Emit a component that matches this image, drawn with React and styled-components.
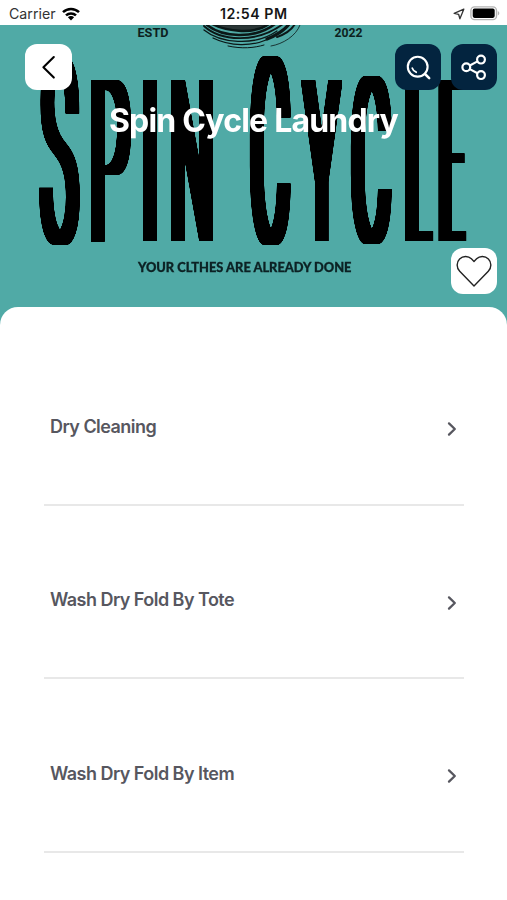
import React from "react"
import styled, { createGlobalStyle } from "styled-components"

const GlobalStyle = createGlobalStyle`
  :root {
    --white: #fff;
    --black: #000;
    --teal: #50aaa6;
    --navy: #03243f;
    --text: #57575f;
    --line: #e8e8e8;
  }
  * {
    box-sizing: border-box;
  }
  body {
    margin: 0;
    background: var(--white);
    font-family: Inter, "Liberation Sans", sans-serif;
  }
`
const Screen = styled.div`
  width: 507px;
  height: 900px;
  overflow: hidden;
  display: flex;
  flex-direction: column;
  background: var(--white);
`
const StatusBar = styled.header`
  height: 25px;
  flex-shrink: 0;
  padding: 2px 7px 0 9px;
  display: grid;
  grid-template-columns: 1fr auto 1fr;
  align-items: center;
  color: #161616;
`
const StatusGroup = styled.div`
  display: flex;
  align-items: center;
  justify-content: ${props => (props.$end ? "flex-end" : "flex-start")};
  gap: ${props => (props.$end ? "5px" : "6px")};
  svg {
    display: block;
  }
`
const Carrier = styled.span`
  font-size: 14.2px;
  line-height: 20px;
  color: #333;
`
const Clock = styled.time`
  margin-right: 1.5px;
  font-size: 14.2px;
  line-height: 20px;
  font-weight: 600;
  letter-spacing: 0.5px;
`
const Hero = styled.section`
  position: relative;
  height: 302px;
  flex-shrink: 0;
  padding: 18.5px 10px 0 25px;
  display: flex;
  flex-direction: column;
  background: var(--teal);
`
const Artwork = styled.svg`
  position: absolute;
  top: 0;
  left: 0;
`
const Toolbar = styled.div`
  position: relative;
  display: flex;
  gap: 9.5px;
`
const IconButton = styled.button`
  width: 46.5px;
  height: 46.5px;
  padding: 0;
  border: none;
  border-radius: 12px;
  display: flex;
  align-items: center;
  justify-content: center;
  flex-shrink: 0;
  color: ${props => (props.$dark ? "var(--white)" : "var(--black)")};
  background: ${props => (props.$dark ? "var(--navy)" : "var(--white)")};
  &:first-child {
    margin-right: auto;
  }
`
const Title = styled.h1`
  position: relative;
  margin: 10px 0 0;
  padding-right: 15px;
  font-size: 32px;
  line-height: 42px;
  font-weight: 700;
  letter-spacing: -0.8px;
  text-align: center;
  color: var(--white);
`
const Favorite = styled.div`
  position: relative;
  margin-top: 105.5px;
  align-self: flex-end;
`
const Sheet = styled.main`
  position: relative;
  flex: 1;
  margin-top: -20.5px;
  padding: 25.5px 43px 0 44px;
  border-radius: 18px 18px 0 0;
  background: var(--white);
`
const ServiceList = styled.ul`
  margin: 0;
  padding: 0;
  list-style: none;
`
const ServiceItem = styled.li`
  height: 173.5px;
  padding: 18px 6px 0;
  border-bottom: 2px solid var(--line);
  display: flex;
  align-items: center;
  justify-content: space-between;
`
const ServiceName = styled.span`
  font-size: 18px;
  font-weight: 600;
  line-height: 24px;
  letter-spacing: -0.54px;
  color: var(--text);
`
const Chevron = styled.svg`
  margin-top: 5px;
`

// x, baseline and scale of every letter of the hero wordmark
const letters = [
  { char: "S", x: 42.8, y: 240.5, sx: 0.56, sy: 2.53 },
  { char: "P", x: 91, y: 239, sx: 0.62, sy: 2.21 },
  { char: "I", x: 141.8, y: 239, sx: 0.62, sy: 2.21 },
  { char: "N", x: 171.8, y: 239, sx: 0.575, sy: 2.21 },
  { char: "C", x: 252, y: 240.5, sx: 0.56, sy: 2.53 },
  { char: "Y", x: 306.5, y: 239, sx: 0.51, sy: 2.21 },
  { char: "C", x: 353, y: 239.8, sx: 0.56, sy: 2.24 },
  { char: "L", x: 407.4, y: 239, sx: 0.4, sy: 2.21 },
  { char: "E", x: 441.3, y: 239, sx: 0.355, sy: 2.21 },
]

const services = ["Dry Cleaning", "Wash Dry Fold By Tote", "Wash Dry Fold By Item"]

const HeroArtwork = () => (
  <Artwork width="507" height="302" viewBox="0 25 507 302">
    <defs>
      {/* widens the stems and keeps their soft edges solid */}
      <filter id="heavy" filterUnits="userSpaceOnUse" x="20" y="40" width="470" height="220">
        <feMorphology operator="dilate" radius="6 2" />
        <feComponentTransfer>
          <feFuncA type="linear" slope="2.6" />
        </feComponentTransfer>
      </filter>
    </defs>
    <g fill="none" stroke="#0b1717" strokeLinecap="round">
      <path d="M212 24C224 30 252 36 269 24Z" fill="#2b3636" strokeWidth="2.4" />
      <path d="M207 25C222 37 254 40 275 24" strokeWidth="2.6" />
      <path d="M204 26C220 41 256 44 283 24" strokeWidth="1.9" />
      <path d="M204 30C220 43 254 47 277 31" strokeWidth="1.3" />
      <path d="M213 38C231 47 252 46 266 40" strokeWidth="1.2" />
      <path d="M228 46C242 49 254 48 264 45" strokeWidth="1" />
      <path d="M267 39C275 36 285 30 289 24" strokeWidth="3.2" />
      <path d="M277 37C286 34 292 29 295 24" strokeWidth="2" />
      <path d="M271 46C283 44 296 36 300 25" strokeWidth="0.8" />
    </g>
    <g fontFamily="Roboto, sans-serif" fontWeight="700" fontSize="13" fill="#0c1f20">
      <text x="137.5" y="36.7" textLength="31" lengthAdjust="spacingAndGlyphs">
        ESTD
      </text>
      <text x="334.5" y="36.7" textLength="28" lengthAdjust="spacingAndGlyphs">
        2022
      </text>
    </g>
    <g filter="url(#heavy)" fontFamily="Roboto, sans-serif" fontWeight="100" fontSize="100">
      {letters.map(({ char, x, y, sx, sy }) => (
        <text key={x} transform={`translate(${x} ${y}) scale(${sx} ${sy})`}>
          {char}
        </text>
      ))}
    </g>
    <text
      x="138"
      y="271.5"
      textLength="213.5"
      lengthAdjust="spacingAndGlyphs"
      fontFamily="Lato, sans-serif"
      fontWeight="900"
      fontSize="13"
      fill="#0c2224"
      stroke="#0c2224"
      strokeWidth="0.3"
    >
      YOUR CLTHES ARE ALREADY DONE
    </text>
  </Artwork>
)

const WifiIcon = () => (
  <svg width="18" height="14" viewBox="0 0 18 14" fill="none" stroke="#000" strokeWidth="2.5">
    <path d="M1 5.2C5.5 0.8 12.5 0.8 17 5.2" />
    <path d="M4 8.4C6.8 5.7 11.2 5.7 14 8.4" />
    <path d="M5.9 10.2C7.7 8.7 10.3 8.7 12.1 10.2L9 13.4Z" fill="#000" stroke="none" />
  </svg>
)
const LocationIcon = () => (
  <svg width="12" height="12" viewBox="0 0 12 12" fill="none" stroke="#333" strokeWidth="1.3">
    <path d="M10.8 1.2L1.2 5.4L5.6 6.3L6.9 10.8Z" strokeLinejoin="round" />
  </svg>
)
const BatteryIcon = () => (
  <svg width="30" height="15" viewBox="0 0 30 15">
    <rect x="0.9" y="0.9" width="25.6" height="12.7" rx="3.6" fill="#fff" stroke="#b4b4b4" strokeWidth="1.4" />
    <rect x="2.7" y="2.6" width="22" height="9.3" rx="1.8" fill="#000" />
    <path d="M27.8 5V9.5C29.8 8.7 29.8 5.8 27.8 5Z" fill="#b4b4b4" />
  </svg>
)
const BackIcon = () => (
  <svg width="46" height="46" viewBox="0 0 46 46" fill="none" stroke="currentColor" strokeWidth="2.1">
    <path d="M28.8 13L18.4 23.3L28.8 33.6" strokeLinecap="round" strokeLinejoin="round" />
  </svg>
)
const SearchIcon = () => (
  <svg width="46" height="46" viewBox="0 0 46 46" fill="none" stroke="currentColor" strokeWidth="2.1">
    <circle cx="22.7" cy="22.7" r="9.9" />
    <path d="M30 30L34.2 34.2" strokeWidth="2.5" strokeLinecap="round" />
    <path d="M17.3 24.2C18 26.2 19.2 27.5 21.2 28.2" strokeWidth="1.8" strokeLinecap="round" />
  </svg>
)
const ShareIcon = () => (
  <svg width="46" height="46" viewBox="0 0 46 46" fill="none" stroke="currentColor" strokeWidth="2.2">
    <circle cx="15.3" cy="23.3" r="3.9" />
    <circle cx="30" cy="15.6" r="3.9" />
    <circle cx="30" cy="31.1" r="3.9" />
    <path d="M18.8 21.5L26.5 17.4M18.8 25.1L26.5 29.3" />
  </svg>
)
const HeartIcon = () => (
  <svg width="46" height="46" viewBox="0 0 46 46" fill="none" stroke="#222" strokeWidth="1.4">
    <path
      d="M23 38L8.7 23.2C5.3 19.6 5.3 14.3 8.6 11C12 7.7 17.2 7.7 20.4 10.8L23 13.4L25.6 10.8C28.8 7.7 34 7.7 37.4 11C40.7 14.3 40.7 19.6 37.3 23.2Z"
      strokeLinejoin="round"
    />
  </svg>
)

const App = () => {
  return (
    <Screen>
      <GlobalStyle />
      <StatusBar>
        <StatusGroup>
          <Carrier>Carrier</Carrier>
          <WifiIcon />
        </StatusGroup>
        <Clock>12:54 PM</Clock>
        <StatusGroup $end>
          <LocationIcon />
          <BatteryIcon />
        </StatusGroup>
      </StatusBar>
      <Hero>
        <HeroArtwork />
        <Toolbar>
          <IconButton aria-label="Back">
            <BackIcon />
          </IconButton>
          <IconButton $dark aria-label="Search">
            <SearchIcon />
          </IconButton>
          <IconButton $dark aria-label="Share">
            <ShareIcon />
          </IconButton>
        </Toolbar>
        <Title>Spin Cycle Laundry</Title>
        <Favorite>
          <IconButton aria-label="Favorite">
            <HeartIcon />
          </IconButton>
        </Favorite>
      </Hero>
      <Sheet>
        <ServiceList>
          {services.map(name => (
            <ServiceItem key={name}>
              <ServiceName>{name}</ServiceName>
              <Chevron width="12" height="16" viewBox="0 0 12 16" fill="none" stroke="#57575f" strokeWidth="2.3">
                <path d="M3 2.4L8.8 8L3 13.6" strokeLinecap="round" strokeLinejoin="round" />
              </Chevron>
            </ServiceItem>
          ))}
        </ServiceList>
      </Sheet>
    </Screen>
  )
}

export default App
